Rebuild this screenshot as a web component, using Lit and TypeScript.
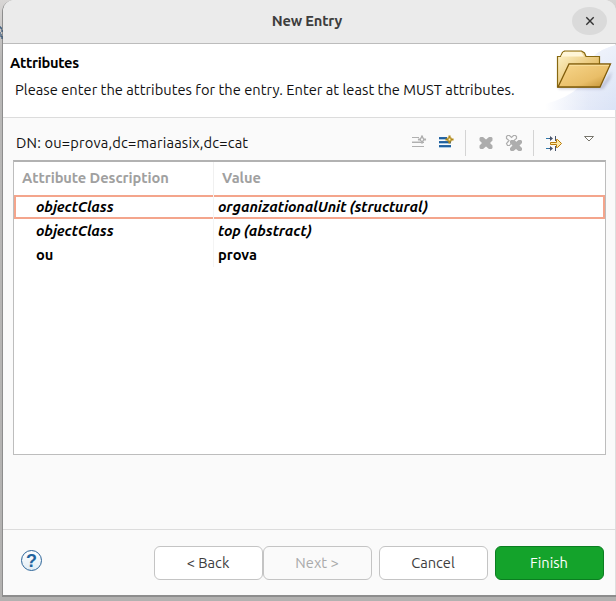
import { LitElement, html, css, svg } from "lit";
import { customElement } from "lit/decorators.js";

const star = (x: number, y: number, stroke: string, fill: string) => svg`
  <path transform="translate(${x} ${y})" d="M3 0H4V2H5V3H7V4H5V5H4V7H3V5H2V4H0V3H2V2H3Z" fill=${fill} stroke=${stroke} stroke-width="1.100" />`;

const addIcon = html`<svg class="icon i-add" width="16" height="16" viewBox="0 0 16 16">
  <path d="M1 3.500H8M1 8.500H13M1 12.500H13" stroke="#b0b0b0" fill="none" /><path d="M1 7.500H9" stroke="#d8d8d8"/>
  ${star(7.500, 2, "#b0b0b0", "#fafafa")}</svg>`;

const addValueIcon = html`<svg class="icon i-value" width="16" height="16" viewBox="0 0 16 16">
  <path d="M1 2.500H9M1 6.500H13M1 10.500H13" stroke="#2a68a4" />
  <path d="M1 3.500H9M1 7.500H13M1 11.500H13" stroke="#1f5f9e" />
  <path d="M1 4.500H9M1 8.500H13M1 12.500H13" stroke="#a9cbe5" />
  ${star(8, 1, "#b18918", "#fff4c4")}</svg>`;

const deleteIcon = html`<svg class="icon i-del" width="16" height="16" viewBox="0 0 16 16">
  <path d="M2.500 2H5L8 4.500L11 2H13.500L14.500 3V5.500L12 8L14.500 10.500V13L13.500 14H11L8 11.500L5 14H2.500L1.500 13V10.500L4 8L1.500 5.500V3Z" fill="#adadad" /></svg>`;

const deleteAllIcon = html`<svg class="icon i-delall" width="18" height="18" viewBox="0 0 18 18">
  <path d="M2.500 1.500H4.500L6.500 3.500L8.500 1.500H10.500L11.500 2.500V4.500L9 6.500L11 8.500L9 11L6.500 9L4.500 11.500H2.500L1.500 9.500L4 6.500L1.500 4.500V2.500Z" fill="#fafafa" stroke="#adadad" stroke-width="1.200" />
  <path d="M6 6H8.500L11 8L13.500 6H16L17 7V9L14.500 11.500L17 14V16L16 17H13.500L11 15L8.500 17H6L5 16V14L7.500 11.500L5 9V7Z" fill="#adadad" /></svg>`;

const valueEditorIcon = html`<svg class="icon i-arrows" width="18" height="18" viewBox="0 0 18 18">
  <path d="M1 3.500H6M1 13.500H6" stroke="#2e78ad" />
  <path d="M5 1L8 3.500L5 6ZM5 11L8 13.500L5 16Z" fill="#46526a" />
  <path d="M4 3.500H7M4 13.500H7" stroke="#46526a" />
  <path d="M10.500 1V6M10.500 11V16" stroke="#46526a" />
  <path d="M5.500 7.500H11.500V4.500L12.500 4.500L16.500 8.500L12.500 12.500H11.500V9.500H5.500Z" fill="#ffe9a5" stroke="#b87c0c" /></svg>`;

const menuIcon = html`<svg class="icon i-menu" width="12" height="8" viewBox="0 0 12 8">
  <path d="M1.500 1.500H10.500L6 6Z" fill="#fff" stroke="#77756c" /></svg>`;

const folder = html`<svg class="folder" width="75" height="66" viewBox="0 0 75 66">
  <defs>
    <linearGradient id="sky" x1="0" x2="1" y1="0" y2="0"><stop offset="0" stop-color="#e3e9f8" stop-opacity="0"/><stop offset=".6" stop-color="#e3e9f8"/><stop offset="1" stop-color="#dae3f6"/></linearGradient>
    <linearGradient id="fade" x1="0" x2="0" y1="0" y2="1"><stop offset="0" stop-color="#fff" stop-opacity=".5"/><stop offset="1" stop-color="#fff" stop-opacity="0"/></linearGradient>
    <linearGradient id="back" x1="0" x2="1" y1="0" y2="1"><stop offset="0" stop-color="#fff5cd"/><stop offset=".7" stop-color="#e5be68"/></linearGradient>
    <linearGradient id="front" x1="0" x2="1" y1="0" y2="1"><stop offset="0" stop-color="#f8d78d"/><stop offset=".65" stop-color="#e9be68"/><stop offset="1" stop-color="#bd8b2d"/></linearGradient>
    <filter id="soft" x="-20%" y="-50%" width="140%" height="200%"><feGaussianBlur stdDeviation="1.500"/></filter>
  </defs>
  <path d="M4 66V60Q50 48 53 12Q60 5 75 1V66Z" fill="url(#sky)"/>
  <path d="M4 66V60Q50 48 53 12Q60 5 75 1V66Z" fill="url(#fade)"/>
  <path d="M17 42L60 42L71 27L69 35L62 45H18Z" fill="#6b6b91" opacity=".35" filter="url(#soft)"/>
  <path d="M16.500 43V12.500H19.500L21.500 8.500L23.500 7H40.500L43.500 9L45 12.500H58.500V43Z" fill="url(#back)" stroke="#87680f" stroke-width="1.200"/>
  <path d="M20 12.500L22.500 8H40L43 12.500Z" fill="#fff6d8"/>
  <path d="M17 43L28 20H69.500L59 43Z" fill="url(#front)" stroke="#805c0b" stroke-width="1.300"/>
  <path d="M28.500 21.300H68" stroke="#fbe1a1"/></svg>`;

const rows = [
  { name: "objectClass", value: "organizationalUnit (structural)", cls: "must selected" },
  { name: "objectClass", value: "top (abstract)", cls: "must" },
  { name: "ou", value: "prova", cls: "" },
];

@customElement("app-root")
export class AppRoot extends LitElement {
  static styles = css`
    :host { display: block; box-sizing: border-box; width: 616px; height: 601px; overflow: hidden;
      padding: 0 0 4px 2px; background: linear-gradient(#d8d6d5, #b9b8b7 10%, #b2b1b0);
      font: 14.667px/20px Ubuntu, "Noto Sans", sans-serif; color: #111; position: relative; }
    * { box-sizing: border-box; }
    svg { display: block; flex: none; }
    .window { height: 597px; background: #fafafa; border: solid #8d8d8d; border-width: 0 0 2px 1px;
      border-radius: 12px 12px 0 0; display: flex; flex-direction: column; overflow: hidden;
      box-shadow: inset -1px 0 #dedede; }
    .titlebar { height: 44px; flex: none; background: #ebebeb; border-bottom: 1px solid #bcbcbc;
      display: flex; align-items: center; padding: 0 8px 2px 41px; }
    .title { flex: 1; text-align: center; font-weight: 600; color: #3d3d3d; white-space: nowrap; padding-right: 2px;
      letter-spacing: -.2px; }
    .close { width: 35px; height: 28px; border: 0; border-radius: 50%; background: #dadada; padding: 0;
      display: grid; place-items: center; margin-right: 1px; }
    .banner { height: 74px; flex: none; display: flex; justify-content: space-between; background: #fff;
      border-bottom: 1px solid #dcdcdc; margin-right: 1px; }
    .intro { padding: 9px 0 0 7px; white-space: nowrap; }
    .intro h1 { margin: 0; font-size: 14.667px; line-height: 20px; font-weight: 700; color: #000; letter-spacing: -.3px; }
    .intro p { margin: 7px 0 0 5px; letter-spacing: .03px; }
    .folder { margin-right: -1px; }
    .toolbar { height: 42px; flex: none; display: flex; padding: 0 0 0 13px; }
    .dn { width: 397px; padding-top: 15px; white-space: nowrap; letter-spacing: .18px; }
    .icon { margin-top: 16px; }
    .i-add { margin-left: -2px; }
    .i-value { margin: 17px 0 0 11px; }
    .sep { width: 1px; height: 26px; margin: 12px 0 0 11px; background: #d4d4d4; }
    .i-del { margin: 17px 0 0 12px; }
    .i-delall { margin-left: 11px; }
    .sep.second { margin-left: 10px; }
    .i-arrows { margin: 17px 0 0 11px; }
    .i-menu { margin: 17px 0 0 20px; }
    .table { height: 295px; flex: none; margin: 0 10px 0 10px; background: #fff; border: 1px solid #bdbdbd;
      border-top: 2px solid #b2b2b2; }
    .head, .row { display: grid; grid-template-columns: 199px 1fr; white-space: nowrap; }
    .head { height: 33px; color: #a0a0a0; font-weight: 600; letter-spacing: -.08px; }
    .head span { padding: 6px 0 0 8px; }
    .head span + span { border-left: 1px solid #f0f0f0; }
    .row { height: 24px; font-weight: 700; color: #000; line-height: 24px; }
    .row span { padding-left: 22px; }
    .row span + span { padding-left: 4px; border-left: 1px solid #f4f4f4; }
    .must { font-style: italic; font-weight: 600; letter-spacing: -.05px; }
    .selected { box-shadow: inset 0 0 0 2px #f4a58c; }
    .footer { margin-top: auto; height: 66px; flex: none; border-top: 1px solid #dcdcdc; display: flex;
      align-items: flex-start; padding: 16px 12px 0 18px; }
    .help { margin: 4px auto 0 0; width: 21px; height: 21px; border: 1.5px solid #2b6498; border-radius: 50%;
      background: linear-gradient(#fff, #e1edf5); color: #22649d; text-align: center;
      font-size: 18px; line-height: 18px; font-weight: 700; padding: 0; }
    .btn { width: 109px; height: 34px; border: 1px solid #c4c4c4; border-radius: 6px; background: #fff;
      color: #3d3d3d; font: inherit; padding: 0 1px 0 0; }
    .disabled { background: #fafafa; color: #aaa; }
    .cancel, .finish { margin-left: 7px; }
    .finish { background: #14a32b; border-color: #0b7e21; color: #fff; }
    .below { position: absolute; left: 0; top: 25px; }
  `;

  render() {
    return html`
      <svg class="below" width="3" height="15" viewBox="0 0 3 15"><path d="M0 2H1V4H2M1 6H3M0 8H1M1 9V12M2 11V14" stroke="#183f68" fill="none"/></svg>
      <div class="window">
        <header class="titlebar">
          <div class="title">New Entry</div>
          <button class="close" aria-label="Close"><svg width="10" height="10" viewBox="0 0 10 10"><path d="M1.300 1.300L8.700 8.700M8.700 1.300L1.300 8.700" stroke="#333" stroke-width="1.400"/></svg></button>
        </header>
        <section class="banner">
          <div class="intro"><h1>Attributes</h1><p>Please enter the attributes for the entry. Enter at least the MUST attributes.</p></div>
          ${folder}
        </section>
        <div class="toolbar">
          <div class="dn">DN: ou=prova,dc=mariaasix,dc=cat</div>
          ${addIcon}${addValueIcon}<i class="sep"></i>${deleteIcon}${deleteAllIcon}<i class="sep second"></i>${valueEditorIcon}${menuIcon}
        </div>
        <div class="table">
          <div class="head"><span>Attribute Description</span><span>Value</span></div>
          ${rows.map((r) => html`<div class="row ${r.cls}"><span>${r.name}</span><span>${r.value}</span></div>`)}
        </div>
        <footer class="footer">
          <button class="help">?</button>
          <button class="btn">&lt; Back</button>
          <button class="btn disabled">Next &gt;</button>
          <button class="btn cancel">Cancel</button>
          <button class="btn finish">Finish</button>
        </footer>
      </div>`;
  }
}
